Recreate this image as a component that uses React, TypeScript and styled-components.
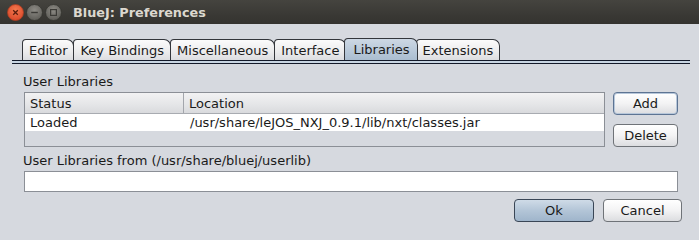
import React from 'react';
import styled, { createGlobalStyle } from 'styled-components';

const Global = createGlobalStyle`
  html, body {
    margin: 0;
    padding: 0;
    background: #d6d9df;
    overflow: hidden;
  }
  body {
    font-family: "DejaVu Sans", sans-serif;
    font-size: 13px;
    color: #1a1a1a;
  }
`;

const Window = styled.div`
  width: 699px;
  height: 240px;
  display: flex;
  flex-direction: column;
  background: #d6d9df;
`;

const TitleBar = styled.div`
  height: 24px;
  display: flex;
  align-items: center;
  padding-left: 7px;
  background: linear-gradient(#45443f, #3a3935 60%, #34332f);
`;

const WinButtons = styled.div`
  display: flex;
  gap: 2px;
  margin-right: 11px;
`;

const Title = styled.div`
  font-family: "DejaVu Sans", sans-serif;
  font-weight: bold;
  font-size: 12.8px;
  color: #dcd8cf;
`;

const TabArea = styled.div`
  margin: 15px 9px 0 12px;
`;

const TabStrip = styled.div`
  display: flex;
  align-items: flex-end;
  padding-left: 10px;
  height: 21px;
`;

const Tab = styled.div<{ $active?: boolean }>`
  height: ${p => (p.$active ? 22 : 21)}px;
  box-sizing: border-box;
  padding: 0 ${p => (p.$active ? 7 : 6)}px 0 ${p => (p.$active ? 8 : 6)}px;
  margin-left: ${p => (p.$active ? -2 : -1)}px;
  margin-right: ${p => (p.$active ? -1 : 0)}px;
  display: flex;
  align-items: center;
  border: 1px solid #33363b;
  border-bottom: none;
  border-radius: 4px 7px 0 0;
  background: ${p =>
    p.$active
      ? 'linear-gradient(#cdd8e4, #b9c9d9 55%, #aabdd0)'
      : 'linear-gradient(#fbfbfb, #ebebec 60%, #dcdde0)'};
  position: relative;
  z-index: ${p => (p.$active ? 2 : 1)};
  &:first-child {
    margin-left: 0;
  }
`;

const TabRule = styled.div`
  height: 4px;
  box-sizing: border-box;
  border-top: 1px solid #141a2a;
  border-bottom: 1px solid #141a2a;
  background: #c8d5e2;
`;

const Panel = styled.div`
  padding: 10px 0 0 11px;
`;

const Label = styled.div`
  height: 16px;
  line-height: 16px;
`;

const LibRow = styled.div`
  display: flex;
  gap: 8px;
  margin-top: 2px;
`;

const Table = styled.div`
  width: 581px;
  height: 55px;
  box-sizing: border-box;
  margin-left: 1px;
  border: 1px solid #8b8f96;
  background: #d6d9df;
`;

const HeaderRow = styled.div`
  display: grid;
  grid-template-columns: 159px 1fr;
  height: 20px;
  background: linear-gradient(#f2f2f3, #e4e5e7 60%, #d9dadd);
  border-bottom: 1px solid #a8abb1;
`;

const HeaderCell = styled.div<{ $first?: boolean }>`
  display: flex;
  align-items: center;
  padding-left: 5px;
  border-right: ${p => (p.$first ? '1px solid #a3a6ac' : 'none')};
`;

const DataRow = styled.div`
  display: grid;
  grid-template-columns: 160px 1fr;
  height: 17px;
  background: #ffffff;
`;

const DataCell = styled.div`
  display: flex;
  align-items: center;
  padding-left: 5px;
`;

const SideButtons = styled.div`
  display: flex;
  flex-direction: column;
  gap: 9px;
`;

const Button = styled.button<{ $w: number; $variant?: 'default' | 'focus' | 'primary' }>`
  width: ${p => p.$w}px;
  height: 23px;
  padding: 0;
  font-family: "DejaVu Sans", sans-serif;
  font-size: 13px;
  color: #1a1a1a;
  border-radius: 4px;
  border: 1px solid
    ${p => (p.$variant === 'primary' ? '#3a4656' : p.$variant === 'focus' ? '#5d7493' : '#6f7378')};
  background: ${p =>
    p.$variant === 'primary'
      ? 'linear-gradient(#cfdbe7, #b3c5d7 50%, #9fb5cb)'
      : 'linear-gradient(#ffffff, #f3f3f4 50%, #dcdde0)'};
  box-shadow: ${p => (p.$variant === 'focus' ? 'inset 0 0 0 1px #b7c7da' : 'none')};
`;

const FieldLabel = styled(Label)`
  margin-top: 6px;
`;

const Field = styled.div`
  margin: 2px 0 0 1px;
  width: 654px;
  height: 21px;
  box-sizing: border-box;
  border: 1px solid #8b8f96;
  background: #ffffff;
`;

const Footer = styled.div`
  display: flex;
  justify-content: flex-end;
  gap: 9px;
  padding: 7px 17px 0 0;
`;

const WinButton = ({ kind }: { kind: 'close' | 'min' | 'max' }) => {
  const close = kind === 'close';
  return (
    <svg width="17" height="17" viewBox="0 0 17 17">
      <defs>
        <radialGradient id={`g-${kind}`} cx="50%" cy="35%" r="65%">
          <stop offset="0%" stopColor={close ? '#f47a4f' : '#8d8b85'} />
          <stop offset="100%" stopColor={close ? '#d9482a' : '#5d5c57'} />
        </radialGradient>
      </defs>
      <circle cx="8.5" cy="8.5" r="8" fill={`url(#g-${kind})`} stroke={close ? '#a83d22' : '#34332f'} strokeWidth="0.8" />
      {kind === 'close' && (
        <path d="M6.2 6.2 L10.8 10.8 M10.8 6.2 L6.2 10.8" stroke="#5a1d0e" strokeWidth="1.3" />
      )}
      {kind === 'min' && <path d="M5.2 8.5 H11.8" stroke="#3b3a36" strokeWidth="1.4" />}
      {kind === 'max' && <rect x="5.6" y="5.6" width="5.8" height="5.8" fill="none" stroke="#3b3a36" strokeWidth="1.2" />}
    </svg>
  );
};

const tabs = ['Editor', 'Key Bindings', 'Miscellaneous', 'Interface', 'Libraries', 'Extensions'];

export default function App() {
  return (
    <Window>
      <Global />
      <TitleBar>
        <WinButtons>
          <WinButton kind="close" />
          <WinButton kind="min" />
          <WinButton kind="max" />
        </WinButtons>
        <Title>BlueJ: Preferences</Title>
      </TitleBar>
      <TabArea>
        <TabStrip>
          {tabs.map(t => (
            <Tab key={t} $active={t === 'Libraries'}>
              {t}
            </Tab>
          ))}
        </TabStrip>
        <TabRule />
        <Panel>
          <Label>User Libraries</Label>
          <LibRow>
            <Table>
              <HeaderRow>
                <HeaderCell $first>Status</HeaderCell>
                <HeaderCell>Location</HeaderCell>
              </HeaderRow>
              <DataRow>
                <DataCell>Loaded</DataCell>
                <DataCell>/usr/share/leJOS_NXJ_0.9.1/lib/nxt/classes.jar</DataCell>
              </DataRow>
            </Table>
            <SideButtons>
              <Button $w={65} $variant="focus">Add</Button>
              <Button $w={65}>Delete</Button>
            </SideButtons>
          </LibRow>
          <FieldLabel>User Libraries from (/usr/share/bluej/userlib)</FieldLabel>
          <Field />
        </Panel>
      </TabArea>
      <Footer>
        <Button $w={80} $variant="primary">Ok</Button>
        <Button $w={79}>Cancel</Button>
      </Footer>
    </Window>
  );
}
